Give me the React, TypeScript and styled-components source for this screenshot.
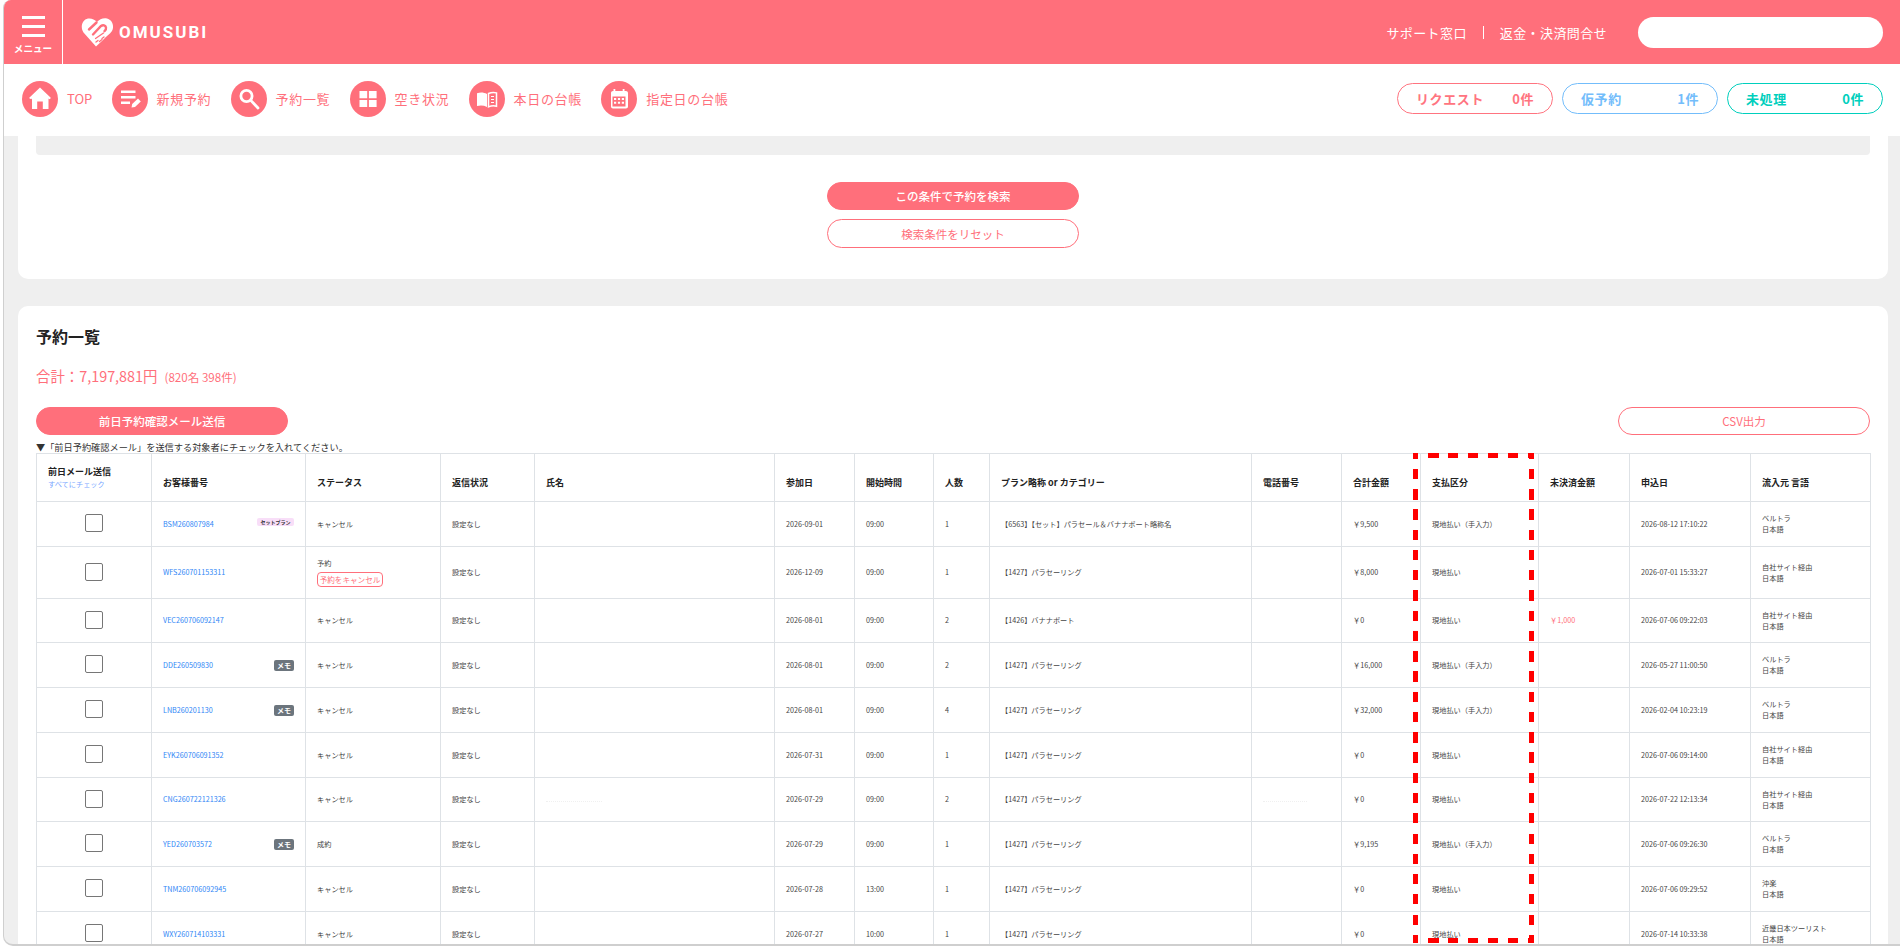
import React from "react";
import styled, { createGlobalStyle } from "styled-components";

const PINK = "#ff6f7b";
const LINE = "#dee2e6";

const GlobalStyle = createGlobalStyle`
  html, body {
    margin: 0;
    height: 100%;
    overflow: hidden;
    background: #fff;
  }
  body {
    font-family: "Noto Sans CJK JP", "Noto Sans", sans-serif;
    color: #333;
  }
  * {
    box-sizing: border-box;
  }
`;

const Frame = styled.div`
  margin-left: 3px;
  height: 946px;
  display: flex;
  flex-direction: column;
  overflow: hidden;
  border-left: 1px solid #cfcfcf;
  border-bottom: 2px solid #cfcfcf;
  border-radius: 8px 0 0 10px;
  background: #efefef;
`;

const Header = styled.header`
  height: 64px;
  flex: none;
  display: flex;
  align-items: center;
  padding-right: 17px;
  background: ${PINK};
  color: #fff;
`;

const MenuButton = styled.div`
  width: 59px;
  height: 64px;
  flex: none;
  display: flex;
  flex-direction: column;
  align-items: center;
  padding-top: 16px;
  border-right: 1px solid #fff;
`;

const MenuBar = styled.span`
  width: 23px;
  height: 2.5px;
  margin-bottom: 6.5px;
  background: #fff;
`;

const MenuLabel = styled.span`
  font-size: 9.6px;
  font-weight: 700;
  line-height: 12px;
  margin-top: -1px;
`;

const Logo = styled.div`
  display: flex;
  align-items: center;
  gap: 5px;
  margin-left: 18px;
`;

const LogoText = styled.span`
  font-family: Roboto, "Liberation Sans", sans-serif;
  font-size: 17px;
  font-weight: 700;
  letter-spacing: 2px;
`;

const HeaderLinks = styled.div`
  margin-left: auto;
  display: flex;
  align-items: center;
  font-size: 13px;
  letter-spacing: 0.4px;
`;

const HeaderDivider = styled.span`
  width: 1px;
  height: 13px;
  margin: 0 16px;
  background: #fff;
`;

const HeaderSearch = styled.div`
  width: 245px;
  height: 31px;
  margin-left: 31px;
  border-radius: 16px;
  background: #fff;
`;

const Nav = styled.nav`
  height: 72px;
  flex: none;
  display: flex;
  align-items: center;
  padding: 0 17px 3px 18px;
  background: #fff;
`;

const NavItem = styled.div<{ $latin?: boolean }>`
  display: flex;
  align-items: center;
  gap: 9px;
  margin-right: 19.2px;
  font-size: 13px;
  letter-spacing: ${(props) => (props.$latin ? 0 : 0.7)}px;
  color: ${PINK};
`;

const NavCircle = styled.svg`
  width: 36px;
  height: 36px;
  flex: none;
`;

const Counters = styled.div`
  margin-left: auto;
  display: flex;
  gap: 9px;
`;

const Counter = styled.div<{ $color: string }>`
  width: 156px;
  height: 31px;
  display: flex;
  align-items: center;
  justify-content: space-between;
  padding: 0 18px;
  border: 1px solid ${(props) => props.$color};
  border-radius: 16px;
  color: ${(props) => props.$color};
  font-size: 13px;
  font-weight: 700;
  letter-spacing: 0.6px;
`;

const Main = styled.main`
  flex: 1;
  min-height: 0;
  overflow: hidden;
  padding: 0 12px 0 14px;
`;

const Card = styled.section`
  background: #fff;
  border-radius: 0 0 10px 10px;
  padding: 0 18px 31px;
`;

const ListCard = styled.section`
  margin-top: 27px;
  padding: 19px 18px 0;
  background: #fff;
  border-radius: 10px 10px 0 0;
`;

const FilterBottom = styled.div`
  height: 19px;
  background: #efefef;
  border-radius: 0 0 4px 4px;
`;

const CenterButtons = styled.div`
  margin-top: 27px;
  display: flex;
  flex-direction: column;
  align-items: center;
  gap: 9px;
`;

const PillButton = styled.div<{ $outline?: boolean; $bold?: boolean }>`
  width: 252px;
  height: 28px;
  display: flex;
  align-items: center;
  justify-content: center;
  border: 1px solid ${PINK};
  border-radius: 15px;
  background: ${(props) => (props.$outline ? "#fff" : PINK)};
  color: ${(props) => (props.$outline ? PINK : "#fff")};
  font-size: 11.5px;
  font-weight: ${(props) => (props.$bold ? 500 : 400)};
`;

const ResetButton = styled(PillButton)`
  height: 29px;
`;

const Title = styled.h2`
  margin: 0;
  font-size: 16px;
  font-weight: 700;
  line-height: 22px;
  color: #222;
`;

const Total = styled.div`
  margin-top: 19px;
  font-size: 14.4px;
  line-height: 20px;
  color: ${PINK};
`;

const TotalSub = styled.span`
  margin-left: 7px;
  font-size: 11.6px;
`;

const ActionRow = styled.div`
  margin-top: 20px;
  display: flex;
  justify-content: space-between;
`;

const Note = styled.div`
  margin-top: 6px;
  font-size: 9.2px;
  line-height: 12px;
  color: #333;
`;

const TableWrap = styled.div`
  position: relative;
`;

// the reference's dashes are longer-gapped than a CSS dashed border
const dashY = "repeating-linear-gradient(to bottom, #f00 0 6px, transparent 6px 16px, #f00 16px 20.25px)";
const dashX = "repeating-linear-gradient(to right, #f00 0 5.5px, transparent 5.5px 15px, #f00 15px 20px)";

const Highlight = styled.div`
  position: absolute;
  left: 1377px;
  top: 0;
  width: 121px;
  height: 490px;
  pointer-events: none;
  background:
    ${dashY} left top / 5px 100% no-repeat,
    ${dashY} right top / 5px 100% no-repeat,
    ${dashX} left top / 100% 5px no-repeat,
    ${dashX} left bottom / 100% 5px no-repeat;
`;

const Table = styled.table`
  width: 100%;
  table-layout: fixed;
  border-collapse: collapse;
  background: #fff;
`;

const HeadCell = styled.th`
  height: 48px;
  padding: 10px 11px 0;
  border: 1px solid ${LINE};
  text-align: left;
  font-size: 9px;
  font-weight: 700;
  line-height: 13px;
  color: #222;
`;

const CheckHeadCell = styled(HeadCell)`
  padding-top: 1px;
`;

const Row = styled.tr<{ $h: number }>`
  height: ${(props) => props.$h}px;
`;

const Cell = styled.td`
  padding: 0 11px;
  border: 1px solid ${LINE};
  font-size: 7.2px;
  line-height: 11px;
  color: #444;
`;

const CheckCell = styled(Cell)`
  padding: 0;
`;

const CheckBox = styled.span`
  display: block;
  width: 18px;
  height: 18px;
  margin: -2px auto 0;
  border: 1px solid #767676;
  border-radius: 2px;
  background: #fff;
`;

const CheckAll = styled.div`
  font-size: 7.2px;
  font-weight: 400;
  color: #7aa7ff;
`;

const OrderCell = styled.div`
  display: flex;
  align-items: center;
  justify-content: space-between;
`;

const OrderLink = styled.span`
  color: #2f86f6;
`;

const MemoBadge = styled.span`
  width: 20px;
  height: 11px;
  display: flex;
  align-items: center;
  justify-content: center;
  border-radius: 2px;
  background: #6c757d;
  color: #fff;
  font-size: 7px;
  font-weight: 700;
`;

const SetBadge = styled.span`
  width: 37px;
  height: 8px;
  display: flex;
  align-items: center;
  justify-content: center;
  margin-top: -4px;
  border-radius: 2px;
  background: #f8def8;
  color: #333;
  font-size: 5px;
  font-weight: 700;
  line-height: 8px;
`;

const CancelButton = styled.span`
  display: block;
  width: 66px;
  height: 15px;
  margin-top: 3px;
  border: 1px solid ${PINK};
  border-radius: 4px;
  color: ${PINK};
  font-size: 7.6px;
  line-height: 13px;
  text-align: center;
`;

const Unpaid = styled.span`
  color: ${PINK};
`;

const Blurred = styled.span<{ $w: number }>`
  display: block;
  width: ${(props) => props.$w}px;
  margin: 4px 0 0;
  border-top: 1px dotted #f0f0f0;
`;

type Reservation = {
  h: number;
  id: string;
  badge?: "set" | "memo";
  status: string;
  cancel?: boolean;
  date: string;
  time: string;
  people: number;
  plan: string;
  total: string;
  pay: string;
  unpaid?: string;
  applied: string;
  source: string;
  blurred?: boolean;
};

const PARASAIL = "【1427】パラセーリング";
const SELF_ENTRY = "現地払い（手入力）";

const reservations: Reservation[] = [
  { h: 45, id: "BSM260807984", badge: "set", status: "キャンセル", date: "2026-09-01", time: "09:00", people: 1, plan: "【6563】【セット】パラセール＆バナナボート略称名", total: "￥9,500", pay: SELF_ENTRY, applied: "2026-08-12 17:10:22", source: "ベルトラ" },
  { h: 52, id: "WFS260701153311", status: "予約", cancel: true, date: "2026-12-09", time: "09:00", people: 1, plan: PARASAIL, total: "￥8,000", pay: "現地払い", applied: "2026-07-01 15:33:27", source: "自社サイト経由" },
  { h: 44, id: "VEC260706092147", status: "キャンセル", date: "2026-08-01", time: "09:00", people: 2, plan: "【1426】バナナボート", total: "￥0", pay: "現地払い", unpaid: "￥1,000", applied: "2026-07-06 09:22:03", source: "自社サイト経由" },
  { h: 45, id: "DDE260509830", badge: "memo", status: "キャンセル", date: "2026-08-01", time: "09:00", people: 2, plan: PARASAIL, total: "￥16,000", pay: SELF_ENTRY, applied: "2026-05-27 11:00:50", source: "ベルトラ" },
  { h: 45, id: "LNB260201130", badge: "memo", status: "キャンセル", date: "2026-08-01", time: "09:00", people: 4, plan: PARASAIL, total: "￥32,000", pay: SELF_ENTRY, applied: "2026-02-04 10:23:19", source: "ベルトラ" },
  { h: 45, id: "EYK260706091352", status: "キャンセル", date: "2026-07-31", time: "09:00", people: 1, plan: PARASAIL, total: "￥0", pay: "現地払い", applied: "2026-07-06 09:14:00", source: "自社サイト経由" },
  { h: 44, id: "CNG260722121326", status: "キャンセル", date: "2026-07-29", time: "09:00", people: 2, plan: PARASAIL, total: "￥0", pay: "現地払い", applied: "2026-07-22 12:13:34", source: "自社サイト経由", blurred: true },
  { h: 45, id: "YED260703572", badge: "memo", status: "成約", date: "2026-07-29", time: "09:00", people: 1, plan: PARASAIL, total: "￥9,195", pay: SELF_ENTRY, applied: "2026-07-06 09:26:30", source: "ベルトラ" },
  { h: 45, id: "TNM260706092945", status: "キャンセル", date: "2026-07-28", time: "13:00", people: 1, plan: PARASAIL, total: "￥0", pay: "現地払い", applied: "2026-07-06 09:29:52", source: "沖楽" },
  { h: 45, id: "WXY260714103331", status: "キャンセル", date: "2026-07-27", time: "10:00", people: 1, plan: PARASAIL, total: "￥0", pay: "現地払い", applied: "2026-07-14 10:33:38", source: "近畿日本ツーリスト" },
];

const columnWidths = [115, 154, 135, 94, 240, 80, 79, 56, 262, 90, 79, 118, 91, 121, 120];

const headings = ["お客様番号", "ステータス", "返信状況", "氏名", "参加日", "開始時間", "人数", "プラン略称 or カテゴリー", "電話番号", "合計金額", "支払区分", "未決済金額", "申込日", "流入元 言語"];

const Circle = () => <circle cx="18" cy="18" r="18" fill={PINK} />;

const navItems: { label: string; icon: React.ReactNode }[] = [
  {
    label: "TOP",
    icon: <path fill="#fff" d="M18 6.5 29 17l-1.600 1.200-.9-.8V28h-5.700v-7.500h-5.600V28H10V17.400l-.9.8L7 17z" />,
  },
  {
    label: "新規予約",
    icon: (
      <g>
        <path fill="#fff" d="M9 9.500h14.500v2.400H9zM9 15h14.500v2.400H9zM9 20.500h9v2.400H9z" />
        <path fill="#fff" d="M19.500 26.600l.7-3.700 5.800-5.300 2.800 3-5.800 5.400z" />
      </g>
    ),
  },
  {
    label: "予約一覧",
    icon: (
      <g fill="none" stroke="#fff" strokeWidth="2.800">
        <circle cx="15.500" cy="15" r="5.600" />
        <path strokeLinecap="round" d="M20 19.600 27 27" />
      </g>
    ),
  },
  {
    label: "空き状況",
    icon: <path fill="#fff" d="M9.500 10h7.700v7.200H9.500zM18.900 10h7.700v7.200h-7.700zM9.500 18.900h7.700V26H9.500zM18.900 18.900h7.700V26h-7.700z" />,
  },
  {
    label: "本日の台帳",
    icon: (
      <g>
        <path fill="#fff" d="M8 12.200c3.400-1.200 6.800-1 10 .8v13c-3.200-1.600-6.600-1.800-10-.9z" />
        <path fill="none" stroke="#fff" strokeWidth="1.500" d="M19.500 12.500c2.800-1.200 5.500-1.300 8-.6v13.300c-2.500-.6-5.200-.5-8 .7z" />
        <path fill="none" stroke="#fff" strokeWidth="1.100" d="M22 15.500h3M22 18.500h3M22 21.500h3" />
      </g>
    ),
  },
  {
    label: "指定日の台帳",
    icon: (
      <g>
        <path fill="#fff" d="M12.500 8h1.800v2h7.400V8h1.800v2h1.500c1.100 0 2 .9 2 2v13.500c0 1.100-.9 2-2 2h-13c-1.100 0-2-.9-2-2V12c0-1.100.9-2 2-2h.5z" />
        <path fill={PINK} d="M11.500 15.500h13V25.500h-13z" />
        <path fill="#fff" d="M13 17h2.200v2H13zM16.900 17h2.200v2h-2.200zM20.800 17H23v2h-2.200zM13 20.800h2.200v2H13zM16.900 20.800h2.200v2h-2.200zM20.800 20.800H23v2h-2.200z" />
      </g>
    ),
  },
];

function LogoMark() {
  return (
    <svg width="33" height="30" viewBox="0 0 33 30">
      <path fill="#fff" d="M15 29.500 2.500 15.500C-1 10.500 1 2.500 7 1.500c3.500-.5 6.500.8 9 3.500 2.500-2.700 6-4.300 10-3.500 5.500 1.200 7.500 8 5 12.500-2 3-6 5.500-9 9z" />
      <path fill="none" stroke={PINK} strokeWidth="2.400" strokeLinecap="round" d="M8 12.500 15.500 5.500M12 17.500l8-8.500c2-1.500 4.500-.8 5 1.500.3 1.500-.5 2.800-1.500 3.700" />
      <path fill="none" stroke={PINK} strokeWidth="1.300" strokeLinecap="round" d="M14.500 21.500l8-5.500M15 25l2-1.500M18.500 24.500l2.500-2M21 21.500l2-1.500" />
    </svg>
  );
}

function App() {
  return (
    <>
      <GlobalStyle />
      <Frame>
        <Header>
          <MenuButton>
            <MenuBar />
            <MenuBar />
            <MenuBar />
            <MenuLabel>メニュー</MenuLabel>
          </MenuButton>
          <Logo>
            <LogoMark />
            <LogoText>OMUSUBI</LogoText>
          </Logo>
          <HeaderLinks>
            <span>サポート窓口</span>
            <HeaderDivider />
            <span>返金・決済問合せ</span>
          </HeaderLinks>
          <HeaderSearch />
        </Header>

        <Nav>
          {navItems.map((item) => (
            <NavItem key={item.label} $latin={item.label === "TOP"}>
              <NavCircle viewBox="0 0 36 36">
                <Circle />
                {item.icon}
              </NavCircle>
              {item.label}
            </NavItem>
          ))}
          <Counters>
            <Counter $color="#ff7480">
              <span>リクエスト</span>
              <span>0件</span>
            </Counter>
            <Counter $color="#73bdfb">
              <span>仮予約</span>
              <span>1件</span>
            </Counter>
            <Counter $color="#00cfbd">
              <span>未処理</span>
              <span>0件</span>
            </Counter>
          </Counters>
        </Nav>

        <Main>
          <Card>
            <FilterBottom />
            <CenterButtons>
              <PillButton $bold>この条件で予約を検索</PillButton>
              <ResetButton $outline>検索条件をリセット</ResetButton>
            </CenterButtons>
          </Card>

          <ListCard>
            <Title>予約一覧</Title>
            <Total>
              合計：7,197,881円<TotalSub>(820名 398件)</TotalSub>
            </Total>
            <ActionRow>
              <PillButton $bold>前日予約確認メール送信</PillButton>
              <PillButton $outline>CSV出力</PillButton>
            </ActionRow>
            <Note>▼「前日予約確認メール」を送信する対象者にチェックを入れてください。</Note>

            <TableWrap>
              <Table>
                <colgroup>
                  {columnWidths.map((width, index) => (
                    <col key={index} width={width} />
                  ))}
                </colgroup>
                <thead>
                  <tr>
                    <CheckHeadCell>
                      前日メール送信
                      <CheckAll>すべてにチェック</CheckAll>
                    </CheckHeadCell>
                    {headings.map((heading) => (
                      <HeadCell key={heading}>{heading}</HeadCell>
                    ))}
                  </tr>
                </thead>
                <tbody>
                  {reservations.map((r) => (
                    <Row key={r.id} $h={r.h}>
                      <CheckCell>
                        <CheckBox />
                      </CheckCell>
                      <Cell>
                        <OrderCell>
                          <OrderLink>{r.id}</OrderLink>
                          {r.badge === "set" && <SetBadge>セットプラン</SetBadge>}
                          {r.badge === "memo" && <MemoBadge>メモ</MemoBadge>}
                        </OrderCell>
                      </Cell>
                      <Cell>
                        {r.status}
                        {r.cancel && <CancelButton>予約をキャンセル</CancelButton>}
                      </Cell>
                      <Cell>設定なし</Cell>
                      <Cell>{r.blurred && <Blurred $w={56} />}</Cell>
                      <Cell>{r.date}</Cell>
                      <Cell>{r.time}</Cell>
                      <Cell>{r.people}</Cell>
                      <Cell>{r.plan}</Cell>
                      <Cell>{r.blurred && <Blurred $w={44} />}</Cell>
                      <Cell>{r.total}</Cell>
                      <Cell>{r.pay}</Cell>
                      <Cell>{r.unpaid && <Unpaid>{r.unpaid}</Unpaid>}</Cell>
                      <Cell>{r.applied}</Cell>
                      <Cell>
                        {r.source}
                        <br />
                        日本語
                      </Cell>
                    </Row>
                  ))}
                </tbody>
              </Table>
              <Highlight />
            </TableWrap>
          </ListCard>
        </Main>
      </Frame>
    </>
  );
}

export default App;
